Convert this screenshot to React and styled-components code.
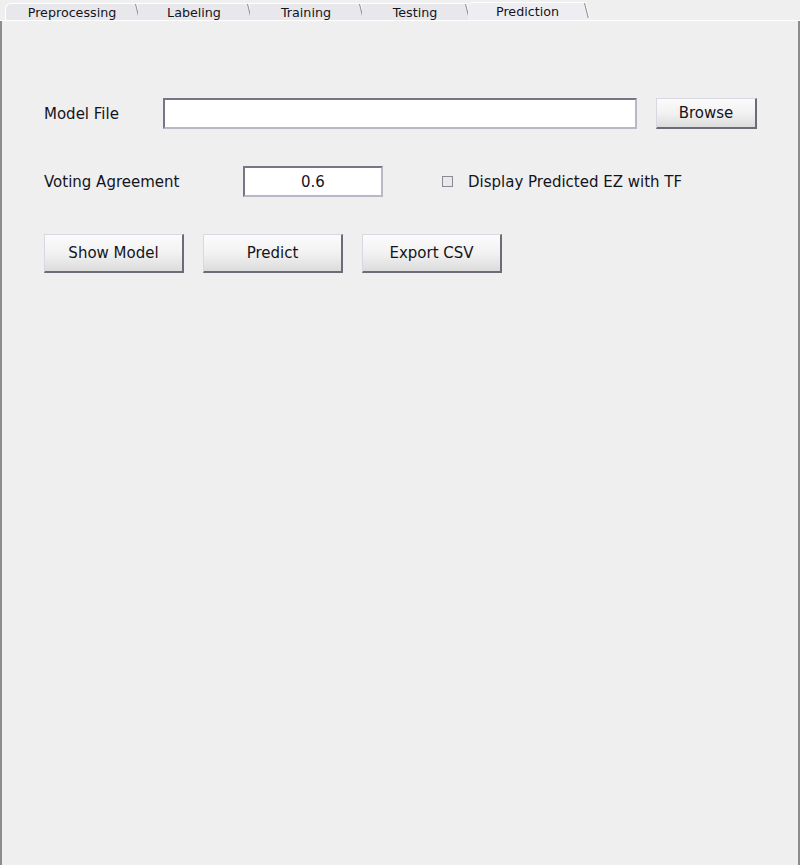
import React, { useState } from 'react';
import styled, { createGlobalStyle } from 'styled-components';

const GlobalStyle = createGlobalStyle`
  html, body {
    margin: 0;
    padding: 0;
    background: #efefef;
  }
  body {
    font-family: "DejaVu Sans", Verdana, sans-serif;
    color: #14141c;
  }
`;

const Frame = styled.div`
  width: 800px;
  height: 865px;
  display: flex;
  flex-direction: column;
  background: #efefef;
  overflow: hidden;
`;

const TabBar = styled.div`
  height: 20px;
  display: flex;
  align-items: flex-end;
  padding-left: 5px;
  border-bottom: 1px solid #ffffff;
  background: #efefef;
`;

const Tab = styled.div`
  position: relative;
  width: ${(p) => p.$width}px;
  height: ${(p) => (p.$active ? 18 : 17)}px;
  box-sizing: border-box;
  display: flex;
  align-items: center;
  justify-content: center;
  font-size: 12.7px;
  padding-top: ${(p) => (p.$active ? 0 : 1)}px;
  background: ${(p) => (p.$active ? '#eeeef2' : '#e8e8ec')};
  border-top: 1px solid #ffffff;
  border-left: ${(p) => (p.$first ? '1px solid #ffffff' : 'none')};
  border-top-left-radius: ${(p) => (p.$first || p.$active ? 6 : 0)}px;
  cursor: default;

  &::after {
    content: '';
    position: absolute;
    right: 2px;
    top: 0;
    width: 1px;
    height: 15px;
    background: #8a8a90;
    transform-origin: top;
    transform: skewX(14deg);
  }
  &::before {
    content: '';
    position: absolute;
    right: 1px;
    top: 0;
    width: 1px;
    height: 15px;
    background: #ffffff;
    transform-origin: top;
    transform: skewX(14deg);
  }
`;

const Panel = styled.div`
  flex: 1;
  border-left: 2px solid #8c8c8c;
  border-right: 2px solid #8c8c8c;
  padding: 77px 0 0 42px;
  display: flex;
  flex-direction: column;
  gap: 37px;
`;

const Row = styled.div`
  display: flex;
  align-items: center;
  height: ${(p) => p.$height || 31}px;
`;

const Label = styled.div`
  width: ${(p) => p.$width}px;
  font-size: 15px;
  flex-shrink: 0;
`;

const Field = styled.input`
  width: ${(p) => p.$width}px;
  height: 31px;
  box-sizing: border-box;
  border-style: solid;
  border-width: 2px;
  border-color: #767684 #b8b8c6 #b8b8c6 #767684;
  background: #ffffff;
  font-family: "DejaVu Sans", Verdana, sans-serif;
  font-size: 15px;
  color: #14141c;
  text-align: ${(p) => p.$align || 'left'};
  padding: 0 6px;
  outline: none;
`;

const Button = styled.button`
  width: ${(p) => p.$width}px;
  height: ${(p) => p.$height}px;
  margin-left: ${(p) => p.$gap || 0}px;
  box-sizing: border-box;
  border-style: solid;
  border-width: 1px 2px 2px 1px;
  border-color: #d8d8e2 #6c6c76 #6c6c76 #d8d8e2;
  background: linear-gradient(#fbfbfb, #f2f2f2 50%, #dcdcdc);
  font-family: "DejaVu Sans", Verdana, sans-serif;
  font-size: 15px;
  color: #14141c;
  padding: 0;
  cursor: pointer;
`;

const CheckRow = styled.label`
  display: flex;
  align-items: center;
  margin-left: 59px;
  font-size: 15px;
  gap: 15px;
  cursor: pointer;
`;

const CheckBox = styled.span`
  width: 11px;
  height: 11px;
  box-sizing: border-box;
  border: 1px solid #8a8a92;
  background: ${(p) => (p.$checked ? '#a0a0b0' : '#e8e8ee')};
`;

const tabs = [
  { name: 'Preprocessing', width: 133 },
  { name: 'Labeling', width: 112 },
  { name: 'Training', width: 112 },
  { name: 'Testing', width: 106 },
  { name: 'Prediction', width: 119 },
];

export default function App() {
  const [active, setActive] = useState('Prediction');
  const [modelFile, setModelFile] = useState('');
  const [agreement, setAgreement] = useState('0.6');
  const [showTF, setShowTF] = useState(false);

  return (
    <Frame>
      <GlobalStyle />
      <TabBar>
        {tabs.map((t, i) => (
          <Tab
            key={t.name}
            $width={t.width}
            $first={i === 0}
            $active={active === t.name}
            onClick={() => setActive(t.name)}
          >
            {t.name}
          </Tab>
        ))}
      </TabBar>
      <Panel>
        <Row>
          <Label $width={119}>Model File</Label>
          <Field $width={474} value={modelFile} onChange={(e) => setModelFile(e.target.value)} />
          <Button $width={101} $height={31} $gap={19}>Browse</Button>
        </Row>
        <Row>
          <Label $width={199}>Voting Agreement</Label>
          <Field $width={140} $align="center" value={agreement} onChange={(e) => setAgreement(e.target.value)} />
          <CheckRow onClick={() => setShowTF(!showTF)}>
            <CheckBox $checked={showTF} />
            Display Predicted EZ with TF
          </CheckRow>
        </Row>
        <Row $height={39}>
          <Button $width={140} $height={39}>Show Model</Button>
          <Button $width={140} $height={39} $gap={19}>Predict</Button>
          <Button $width={140} $height={39} $gap={19}>Export CSV</Button>
        </Row>
      </Panel>
    </Frame>
  );
}
